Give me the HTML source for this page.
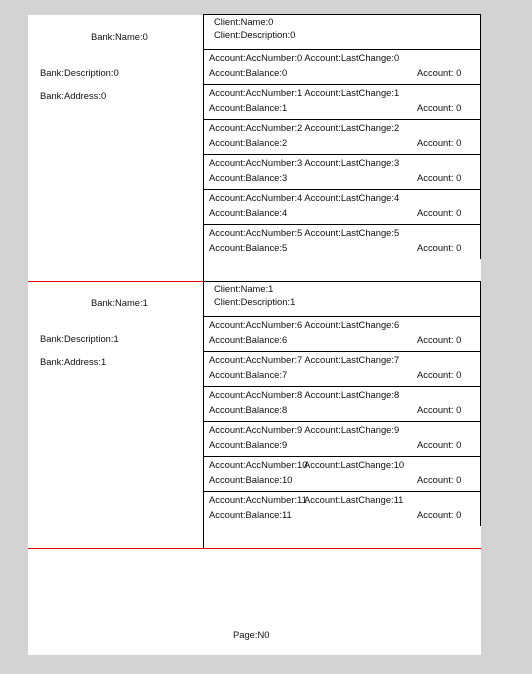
<!DOCTYPE html>
<html><head><meta charset="utf-8"><style>
body{margin:0;width:532px;height:674px;background:#d3d3d3;position:relative;overflow:hidden;font-family:"Liberation Sans",Arial,sans-serif;font-size:9.4px;color:#111}
div{position:absolute}
.t{line-height:11px;white-space:nowrap}
.h{height:1px;background:#000}
.v{width:1px;background:#000}
</style></head><body>
<div style="left:28px;top:15px;width:453px;height:640px;background:#fff"></div>

<div class="t" style="left:91px;top:31px">Bank:Name:0</div>
<div class="t" style="left:40px;top:67px">Bank:Description:0</div>
<div class="t" style="left:40px;top:90px">Bank:Address:0</div>
<div class="h" style="left:203px;top:14px;width:278px"></div>
<div class="v" style="left:203px;top:14px;height:267px"></div>
<div class="v" style="left:480px;top:14px;height:245px"></div>
<div class="t" style="left:214px;top:16px">Client:Name:0</div>
<div class="t" style="left:214px;top:29px">Client:Description:0</div>

<div class="t" style="left:91px;top:297px">Bank:Name:1</div>
<div class="t" style="left:40px;top:333px">Bank:Description:1</div>
<div class="t" style="left:40px;top:356px">Bank:Address:1</div>
<div class="h" style="left:203px;top:281px;width:278px"></div>
<div class="v" style="left:203px;top:281px;height:267px"></div>
<div class="v" style="left:480px;top:281px;height:245px"></div>
<div class="t" style="left:214px;top:283px">Client:Name:1</div>
<div class="t" style="left:214px;top:296px">Client:Description:1</div>
<div style="left:28px;top:281px;width:175px;height:1px;background:#e00000"></div>

<div style="left:28px;top:548px;width:453px;height:1px;background:#e00000"></div>
<div class="t" style="left:233px;top:629px">Page:N0</div>

<div class="h" style="left:203px;top:49px;width:278px"></div>
<div class="t" style="left:209px;top:52px">Account:AccNumber:0 Account:LastChange:0</div>
<div class="t" style="left:209px;top:67px">Account:Balance:0</div><div class="t" style="left:417px;top:67px">Account: 0</div>
<div class="h" style="left:203px;top:84px;width:278px"></div>
<div class="t" style="left:209px;top:87px">Account:AccNumber:1 Account:LastChange:1</div>
<div class="t" style="left:209px;top:102px">Account:Balance:1</div><div class="t" style="left:417px;top:102px">Account: 0</div>
<div class="h" style="left:203px;top:119px;width:278px"></div>
<div class="t" style="left:209px;top:122px">Account:AccNumber:2 Account:LastChange:2</div>
<div class="t" style="left:209px;top:137px">Account:Balance:2</div><div class="t" style="left:417px;top:137px">Account: 0</div>
<div class="h" style="left:203px;top:154px;width:278px"></div>
<div class="t" style="left:209px;top:157px">Account:AccNumber:3 Account:LastChange:3</div>
<div class="t" style="left:209px;top:172px">Account:Balance:3</div><div class="t" style="left:417px;top:172px">Account: 0</div>
<div class="h" style="left:203px;top:189px;width:278px"></div>
<div class="t" style="left:209px;top:192px">Account:AccNumber:4 Account:LastChange:4</div>
<div class="t" style="left:209px;top:207px">Account:Balance:4</div><div class="t" style="left:417px;top:207px">Account: 0</div>
<div class="h" style="left:203px;top:224px;width:278px"></div>
<div class="t" style="left:209px;top:227px">Account:AccNumber:5 Account:LastChange:5</div>
<div class="t" style="left:209px;top:242px">Account:Balance:5</div><div class="t" style="left:417px;top:242px">Account: 0</div>

<div class="h" style="left:203px;top:316px;width:278px"></div>
<div class="t" style="left:209px;top:319px">Account:AccNumber:6 Account:LastChange:6</div>
<div class="t" style="left:209px;top:334px">Account:Balance:6</div><div class="t" style="left:417px;top:334px">Account: 0</div>
<div class="h" style="left:203px;top:351px;width:278px"></div>
<div class="t" style="left:209px;top:354px">Account:AccNumber:7 Account:LastChange:7</div>
<div class="t" style="left:209px;top:369px">Account:Balance:7</div><div class="t" style="left:417px;top:369px">Account: 0</div>
<div class="h" style="left:203px;top:386px;width:278px"></div>
<div class="t" style="left:209px;top:389px">Account:AccNumber:8 Account:LastChange:8</div>
<div class="t" style="left:209px;top:404px">Account:Balance:8</div><div class="t" style="left:417px;top:404px">Account: 0</div>
<div class="h" style="left:203px;top:421px;width:278px"></div>
<div class="t" style="left:209px;top:424px">Account:AccNumber:9 Account:LastChange:9</div>
<div class="t" style="left:209px;top:439px">Account:Balance:9</div><div class="t" style="left:417px;top:439px">Account: 0</div>
<div class="h" style="left:203px;top:456px;width:278px"></div>
<div class="t" style="left:209px;top:459px">Account:AccNumber:10</div><div class="t" style="left:304px;top:459px">Account:LastChange:10</div>
<div class="t" style="left:209px;top:474px">Account:Balance:10</div><div class="t" style="left:417px;top:474px">Account: 0</div>
<div class="h" style="left:203px;top:491px;width:278px"></div>
<div class="t" style="left:209px;top:494px">Account:AccNumber:11</div><div class="t" style="left:304px;top:494px">Account:LastChange:11</div>
<div class="t" style="left:209px;top:509px">Account:Balance:11</div><div class="t" style="left:417px;top:509px">Account: 0</div>
</body></html>
